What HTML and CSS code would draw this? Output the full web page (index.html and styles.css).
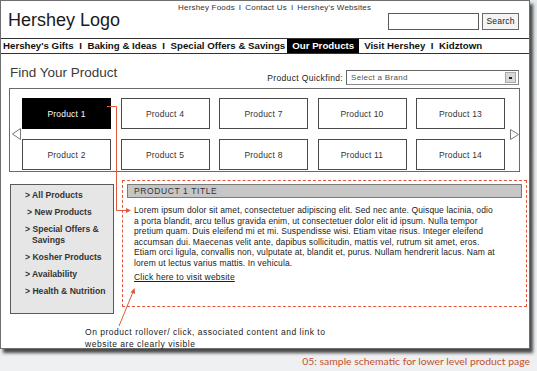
FILE: index.html
```html
<!DOCTYPE html>
<html>
<head>
<meta charset="utf-8">
<link rel="stylesheet" href="styles.css">
</head>
<body>
<div class="frame">
  <header class="header">
    <div class="logo">Hershey Logo</div>
    <div class="header-right">
      <div class="toplinks"><span>Hershey Foods</span><span class="sep">I</span><span>Contact Us</span><span class="sep">I</span><span>Hershey's Websites</span></div>
      <div class="search"><div class="search-input"></div><div class="search-btn">Search</div></div>
    </div>
  </header>
  <nav class="nav">
    <span>Hershey's Gifts</span><span class="sep">I</span><span>Baking &amp; Ideas</span><span class="sep">I</span><span>Special Offers &amp; Savings</span><span class="active">Our Products</span><span class="after-active">Visit Hershey</span><span class="sep">I</span><span>Kidztown</span>
  </nav>
  <div class="find-row">
    <div class="find-title">Find Your Product</div>
    <div class="quickfind">
      <span class="qf-label">Product Quickfind:</span>
      <div class="select"><span class="select-text">Select a Brand</span><span class="select-btn"><span class="select-mark"></span></span></div>
    </div>
  </div>
  <div class="carousel">
    <div class="arrow arrow-left"><svg width="9" height="12" viewBox="0 0 9 12"><polygon points="8.5,0.5 8.5,11.5 0.5,6" fill="#fff" stroke="#7a7a7a" stroke-width="1"/></svg></div>
    <div class="grid">
      <div class="product active">Product 1</div>
      <div class="product">Product 2</div>
      <div class="product">Product 4</div>
      <div class="product">Product 5</div>
      <div class="product">Product 7</div>
      <div class="product">Product 8</div>
      <div class="product">Product 10</div>
      <div class="product">Product 11</div>
      <div class="product">Product 13</div>
      <div class="product">Product 14</div>
    </div>
    <div class="arrow arrow-right"><svg width="9" height="11" viewBox="0 0 9 11"><polygon points="0.5,0.5 0.5,10.5 8.5,5.5" fill="#fff" stroke="#7a7a7a" stroke-width="1"/></svg></div>
  </div>
  <div class="lower">
    <ul class="sidebar">
      <li>&gt; All Products</li>
      <li class="nudge">&gt; New Products</li>
      <li>&gt; Special Offers &amp;<br>Savings</li>
      <li>&gt; Kosher Products</li>
      <li>&gt; Availability</li>
      <li>&gt; Health &amp; Nutrition</li>
    </ul>
    <div class="detail">
      <div class="detail-title">PRODUCT 1 TITLE</div>
      <p class="detail-text">Lorem ipsum dolor sit amet, consectetuer adipiscing elit. Sed nec ante. Quisque lacinia, odio<br>a porta blandit, arcu tellus gravida enim, ut consectetuer dolor elit id ipsum. Nulla tempor<br>pretium quam. Duis eleifend mi et mi. Suspendisse wisi. Etiam vitae risus. Integer eleifend<br>accumsan dui. Maecenas velit ante, dapibus sollicitudin, mattis vel, rutrum sit amet, eros.<br>Etiam orci ligula, convallis non, vulputate at, blandit et, purus. Nullam hendrerit lacus. Nam at<br>lorem ut lectus varius mattis. In vehicula.</p>
      <a class="detail-link">Click here to visit website</a>
    </div>
  </div>
  <p class="note">On product rollover/ click, associated content and link to<br>website are clearly visible</p>
  <svg class="connectors" width="531" height="350" viewBox="0 0 531 350">
    <polyline points="107,106.5 116.5,106.5 116.5,210.5 127,210.5" fill="none" stroke="#e2583c" stroke-width="1"/>
    <polygon points="131,210.5 126,208 126,213" fill="#e2583c"/>
    <line x1="119" y1="326" x2="133" y2="292" stroke="#e2583c" stroke-width="1"/>
    <polygon points="134.6,288 130.5,292.2 135.2,294" fill="#e2583c"/>
  </svg>
</div>
<p class="caption">05: sample schematic for lower level product page</p>
</body>
</html>
```
FILE: styles.css
```css
html, body {
  margin: 0;
  padding: 0;
}
body {
  width: 537px;
  height: 371px;
  overflow: hidden;
  background: linear-gradient(180deg, #e4e8eb 0%, #eef0f2 100%);
  font-family: "Liberation Sans", Arial, sans-serif;
  color: #333;
}
.frame {
  position: relative;
  width: 530px;
  height: 349px;
  box-sizing: border-box;
  border: 1px solid #6e6e6e;
  background: #fff;
  box-shadow: 3px 4px 3px rgba(45, 45, 45, 0.85);
  display: flex;
  flex-direction: column;
}

/* header */
.header {
  height: 37px;
  display: flex;
  justify-content: space-between;
  flex-shrink: 0;
}
.logo {
  margin: 9px 0 0 7px;
  font-size: 18px;
  line-height: 20px;
  color: #1a1a1a;
}
.header-right {
  width: 341px;
  margin-right: 10px;
  display: flex;
  flex-direction: column;
}
.toplinks {
  margin-top: 2px;
  height: 10px;
  font-size: 8px;
  line-height: 10px;
  letter-spacing: 0.2px;
  color: #333;
  white-space: nowrap;
}
.toplinks .sep {
  margin: 0 4px;
}
.search {
  display: flex;
  justify-content: flex-end;
  gap: 3px;
}
.search-input {
  width: 89px;
  height: 15px;
  border: 1px solid #5a5a5a;
  background: #fff;
}
.search-btn {
  width: 35px;
  height: 15px;
  border: 1px solid #6a6a6a;
  background: #f4f4f4;
  font-size: 8.5px;
  line-height: 15px;
  text-align: center;
  letter-spacing: 0.2px;
  color: #222;
}

/* nav */
.nav {
  height: 14px;
  border-top: 1px solid #333;
  border-bottom: 1px solid #333;
  padding-left: 2px;
  display: flex;
  font-weight: bold;
  font-size: 9.7px;
  line-height: 14px;
  color: #111;
  white-space: nowrap;
  flex-shrink: 0;
}
.nav .sep {
  margin: 0 5.5px;
}
.nav .active {
  margin-left: 2px;
  padding: 0 5px;
  background: #000;
  color: #fff;
}
.nav .after-active {
  margin-left: 5px;
}

/* find row */
.find-row {
  height: 34px;
  display: flex;
  justify-content: space-between;
  align-items: flex-end;
  padding: 0 10px 3px 9px;
  box-sizing: border-box;
  flex-shrink: 0;
}
.find-title {
  font-size: 13.5px;
  line-height: 16px;
  color: #3a3a3a;
  margin-bottom: 4px;
}
.quickfind {
  display: flex;
  align-items: center;
  gap: 3px;
}
.qf-label {
  font-size: 8.5px;
  letter-spacing: 0.35px;
  color: #222;
}
.select {
  width: 171px;
  height: 13px;
  border: 1px solid #8a8a8a;
  border-top-color: #666;
  border-left-color: #666;
  display: flex;
  align-items: center;
  justify-content: space-between;
  background: #fff;
}
.select-text {
  margin-left: 4px;
  font-size: 8px;
  letter-spacing: 0.3px;
  color: #555;
}
.select-btn {
  width: 9px;
  height: 9px;
  margin-right: 2px;
  background: #d8d8d8;
  border: 1px solid #aaa;
  display: flex;
  align-items: center;
  justify-content: center;
}
.select-mark {
  width: 3px;
  height: 2px;
  background: #222;
}

/* carousel */
.carousel {
  margin: 0 9px 0 8px;
  height: 84px;
  box-sizing: border-box;
  border: 1px solid #6a6a6a;
  display: flex;
  align-items: flex-start;
  padding-top: 9px;
  flex-shrink: 0;
}
.arrow {
  display: flex;
  justify-content: center;
}
.arrow-left {
  width: 12px;
  margin-top: 30px;
  justify-content: flex-start;
  padding-left: 2px;
  box-sizing: border-box;
}
.arrow-right {
  width: 14px;
  margin-top: 31px;
  justify-content: flex-end;
  box-sizing: border-box;
}
.grid {
  display: grid;
  grid-template-rows: 31px 31px;
  grid-auto-flow: column;
  grid-auto-columns: 89px;
  column-gap: 9.5px;
  row-gap: 10px;
}
.product {
  box-sizing: border-box;
  border: 1px solid #4a4a4a;
  display: flex;
  align-items: center;
  justify-content: center;
  font-size: 8.5px;
  letter-spacing: 0.2px;
  color: #333;
}
.product.active {
  background: #000;
  color: #fff;
  border-color: #000;
}

/* lower */
.lower {
  display: flex;
  align-items: flex-start;
  height: 142px;
  flex-shrink: 0;
}
.sidebar {
  list-style: none;
  margin: 12px 0 0 9px;
  width: 104px;
  height: 130px;
  box-sizing: border-box;
  border: 1px solid #5a5a5a;
  background: #e6e6e6;
  padding: 5px 0 0 7px;
  display: flex;
  flex-direction: column;
  gap: 6px;
  font-weight: bold;
  font-size: 8.6px;
  line-height: 11px;
  color: #333;
  white-space: nowrap;
}
.sidebar li {
  padding-left: 7px;
  text-indent: -7px;
  margin-left: 7px;
}
.sidebar li.nudge {
  margin-left: 9px;
}
.detail {
  margin: 8px 0 0 8px;
  width: 405px;
  height: 127px;
  box-sizing: border-box;
  border: 1px dashed #e2583c;
  padding: 3px 4px 0 4px;
}
.detail-title {
  height: 14px;
  box-sizing: border-box;
  border: 1px solid #7a7a7a;
  background: #c6c6c6;
  padding-left: 6px;
  font-size: 8.5px;
  line-height: 12px;
  letter-spacing: 0.6px;
  color: #333;
}
.detail-text {
  margin: 7px 0 0 0;
  padding-left: 7px;
  font-size: 8.5px;
  line-height: 10.6px;
  letter-spacing: 0.12px;
  color: #222;
  white-space: nowrap;
}
.detail-link {
  display: block;
  margin-top: 3px;
  padding-left: 7px;
  font-size: 8.5px;
  line-height: 10.6px;
  letter-spacing: 0.2px;
  color: #222;
  text-decoration: underline;
}

/* annotation */
.note {
  margin: 13px 0 0 84px;
  font-size: 8.5px;
  line-height: 11.5px;
  letter-spacing: 0.52px;
  color: #222;
}
.connectors {
  position: absolute;
  left: -1px;
  top: -1px;
  pointer-events: none;
}

.caption {
  margin: 6px 7px 0 0;
  text-align: right;
  font-family: Lato, "Open Sans", sans-serif;
  font-size: 10.4px;
  line-height: 13px;
  color: #c4502c;
}
```
